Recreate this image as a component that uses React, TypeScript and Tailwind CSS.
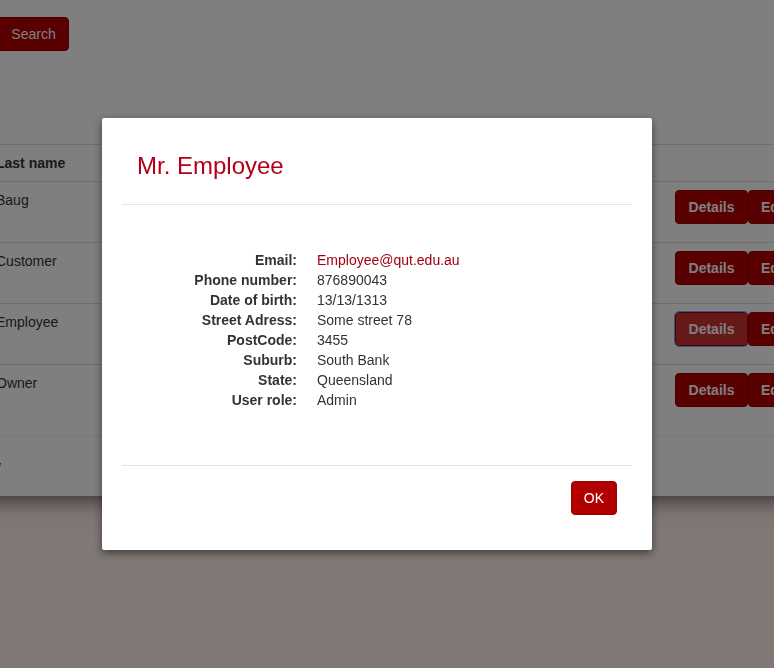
import React from "react";

const button =
  "shrink-0 rounded border border-[#9a0000] bg-[#b20000] px-3 py-1.5 text-sm leading-5 text-white";

const customers = [
  { lastName: "Baug" },
  { lastName: "Customer" },
  { lastName: "Employee", active: true },
  { lastName: "Owner" },
];

const details = [
  { label: "Email:", value: "Employee@qut.edu.au", link: true },
  { label: "Phone number:", value: "876890043" },
  { label: "Date of birth:", value: "13/13/1313" },
  { label: "Street Adress:", value: "Some street 78" },
  { label: "PostCode:", value: "3455" },
  { label: "Suburb:", value: "South Bank" },
  { label: "State:", value: "Queensland" },
  { label: "User role:", value: "Admin" },
];

function CustomerTable() {
  return (
    <table className="w-full table-fixed border-collapse">
      <thead>
        <tr className="border-t border-[#dddddd]">
          <th className="py-2 pr-2 pl-7 text-left font-bold">Last name</th>
          <th className="w-[139px] p-2" aria-label="Actions" />
        </tr>
      </thead>
      <tbody>
        {customers.map((customer) => (
          <tr key={customer.lastName} className="border-t border-[#dddddd]">
            <td className="py-2 pr-2 pl-7 align-top">{customer.lastName}</td>
            <td className="p-2 pb-[18px] align-top">
              <div className="flex">
                <button
                  type="button"
                  className={
                    customer.active
                      ? "min-w-[73px] shrink-0 rounded border border-[#9a0000] bg-[#cc3333] px-3 py-1.5 text-sm leading-5 font-bold text-white outline-1 outline-[#7ba8f0]"
                      : `${button} min-w-[73px] font-bold`
                  }
                >
                  Details
                </button>
                <button type="button" className={`${button} font-bold`}>
                  Edit
                </button>
              </div>
            </td>
          </tr>
        ))}
      </tbody>
    </table>
  );
}

function DetailsDialog() {
  return (
    <div className="fixed inset-0 flex items-start justify-center bg-black/50 pt-[118px] pr-5">
      <section
        role="dialog"
        aria-modal="true"
        aria-labelledby="dialog-title"
        className="w-full max-w-[550px] rounded-xs bg-white px-5 shadow-[0_3px_9px_rgba(0,0,0,0.5)]"
      >
        <header className="border-b border-[#e5e5e5] px-[15px] pt-[35px] pb-[25px]">
          <h4 id="dialog-title" className="text-2xl leading-[26px] text-[#b20017]">
            Mr. Employee
          </h4>
        </header>
        <dl className="grid grid-cols-[160px_1fr] gap-x-5 px-[15px] pt-[45px] pb-[55px]">
          {details.map((item) => (
            <React.Fragment key={item.label}>
              <dt className="text-right font-bold">{item.label}</dt>
              <dd>
                {item.link ? (
                  <a href="mailto:Employee@qut.edu.au" className="text-[#a30010]">
                    {item.value}
                  </a>
                ) : (
                  item.value
                )}
              </dd>
            </React.Fragment>
          ))}
        </dl>
        <footer className="flex justify-end border-t border-[#e5e5e5] px-[15px] pt-[15px] pb-[35px]">
          <button type="button" className={button}>
            OK
          </button>
        </footer>
      </section>
    </div>
  );
}

export default function App() {
  return (
    <div className="min-h-screen overflow-hidden bg-[#fff0ea] font-['Liberation_Sans',Arial,sans-serif] text-sm leading-5 text-[#333333]">
      <main className="-mx-8 bg-white pt-[17px] pb-5 shadow-[0_4px_20px_rgba(0,0,0,0.6)]">
        <div className="mb-[93px] flex pl-[30px]">
          <button type="button" className={`${button} min-w-[71px] rounded-l-none`}>
            Search
          </button>
        </div>
        <CustomerTable />
        <p className="mt-2.5 border-t border-[#eeeeee] px-[26px] pt-5">y</p>
      </main>
      <DetailsDialog />
    </div>
  );
}
